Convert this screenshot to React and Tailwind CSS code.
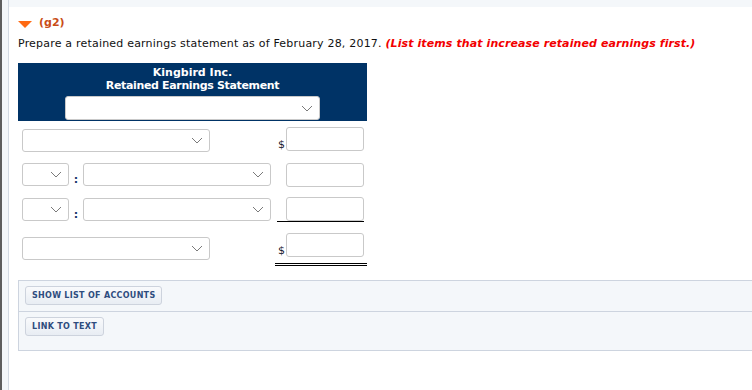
import React from "react";

function Chevron() {
  return (
    <svg width="12" height="7" viewBox="0 0 12 7" className="shrink-0">
      <path d="M1 1l5 5 5-5" fill="none" stroke="#7a7a7a" strokeWidth="1" />
    </svg>
  );
}

function Select({ w }) {
  return (
    <div
      className={`${w} h-[23px] bg-white border border-[#c9c9c9] rounded-[3px] flex items-center justify-end pr-[6px]`}
    >
      <Chevron />
    </div>
  );
}

function Input() {
  return <div className="w-[78px] h-[24px] bg-white border border-[#c9c9c9] rounded-[3px]" />;
}

function Colon() {
  return (
    <span className="w-[14px] text-center text-[11px] font-bold text-[#1b3a6b] self-end leading-none mb-[1px]">
      :
    </span>
  );
}

export default function App() {
  return (
    <div className="flex h-[390px] w-[752px] overflow-hidden bg-white font-['DejaVu_Sans',Verdana,sans-serif]">
      {/* left rail */}
      <div className="w-[2px] bg-[#5e5e5e]" />
      <div className="w-[7px] bg-[#f4f7fa] border-r border-[#d3dae3]" />

      <div className="flex-1 flex flex-col">
        <div className="h-[7px] bg-[#f4f7fa]" />

        <div className="pl-[9px] pt-[8px]">
          {/* heading */}
          <div className="flex items-center h-[16px]">
            <svg width="14" height="7" viewBox="0 0 14 7" className="mt-[2px]">
              <path d="M0 0h14L7 7z" fill="#ff6a13" />
            </svg>
            <span className="ml-[7px] text-[11px] font-bold text-[#c94d17]">(g2)</span>
          </div>

          <p className="mt-[6px] text-[11px] leading-[14px] tracking-[0.2px] text-[#111] whitespace-nowrap">
            Prepare a retained earnings statement as of February 28, 2017.{" "}
            <span className="italic font-bold text-[#f20000] tracking-[0.1px]">
              (List items that increase retained earnings first.)
            </span>
          </p>

          {/* statement */}
          <div className="w-[349px] mt-[12px]">
            <div className="h-[58px] bg-[#003366] flex flex-col items-center pt-[3px]">
              <div className="text-[11px] font-bold text-white leading-[13px]">
                Kingbird Inc.
              </div>
              <div className="text-[11px] font-bold text-white leading-[13px] tracking-[-0.35px]">
                Retained Earnings Statement
              </div>
              <div className="mt-[4px] w-[255px] h-[24px] bg-white border border-[#c9c9c9] rounded-[3px] flex items-center justify-end pr-[6px]">
                <Chevron />
              </div>
            </div>

            {/* row 1 */}
            <div className="flex items-end h-[31px] pl-[4px] pr-[3px]">
              <Select w="w-[188px]" />
              <div className="flex-1" />
              <span className="text-[11px] leading-none text-[#1a1a2e] mb-[2px] mr-[1px]">$</span>
              <div className="mb-[1px]">
                <Input />
              </div>
            </div>

            {/* row 2 */}
            <div className="flex items-end h-[35px] pl-[4px] pr-[3px]">
              <div className="flex items-end mb-[1px]">
                <Select w="w-[47px]" />
                <Colon />
                <Select w="w-[188px]" />
              </div>
              <div className="flex-1" />
              <Input />
            </div>

            {/* row 3 */}
            <div className="flex items-end h-[35px] pl-[4px] pr-[3px]">
              <div className="flex items-end mb-[1px]">
                <Select w="w-[47px]" />
                <Colon />
                <Select w="w-[188px]" />
              </div>
              <div className="flex-1" />
              <div className="w-[87px] border-b border-black flex justify-end">
                <Input />
              </div>
            </div>

            {/* row 4 */}
            <div className="flex items-start h-[44px] pl-[4px] pt-[11px]">
              <div className="mt-[4px]">
                <Select w="w-[188px]" />
              </div>
              <div className="flex-1" />
              <div className="w-[92px] border-b-[3px] border-double border-black pb-[6px] flex items-end justify-end pr-[3px]">
                <span className="text-[11px] leading-none text-[#1a1a2e] mb-[1px] mr-[1px]">$</span>
                <Input />
              </div>
            </div>
          </div>

          {/* tools panel */}
          <div className="mt-[14px] bg-[#f4f7fa] border-t border-b border-l border-[#cdd4df]">
            <div className="h-[31px] flex items-start pt-[5px] pl-[6px] border-b border-[#cdd4df]">
              <button className="h-[19px] px-[6px] rounded-[3px] border border-[#cdd3dd] bg-gradient-to-b from-[#f9fafc] to-[#e8edf3] text-[8px] font-bold text-[#2e4c7e] tracking-[0.3px]">
                SHOW LIST OF ACCOUNTS
              </button>
            </div>
            <div className="h-[38px] flex items-start pl-[6px] pt-[5px]">
              <button className="h-[19px] px-[6px] rounded-[3px] border border-[#cdd3dd] bg-gradient-to-b from-[#f9fafc] to-[#e8edf3] text-[8px] font-bold text-[#2e4c7e] tracking-[0.3px]">
                LINK TO TEXT
              </button>
            </div>
          </div>
        </div>
      </div>
    </div>
  );
}
